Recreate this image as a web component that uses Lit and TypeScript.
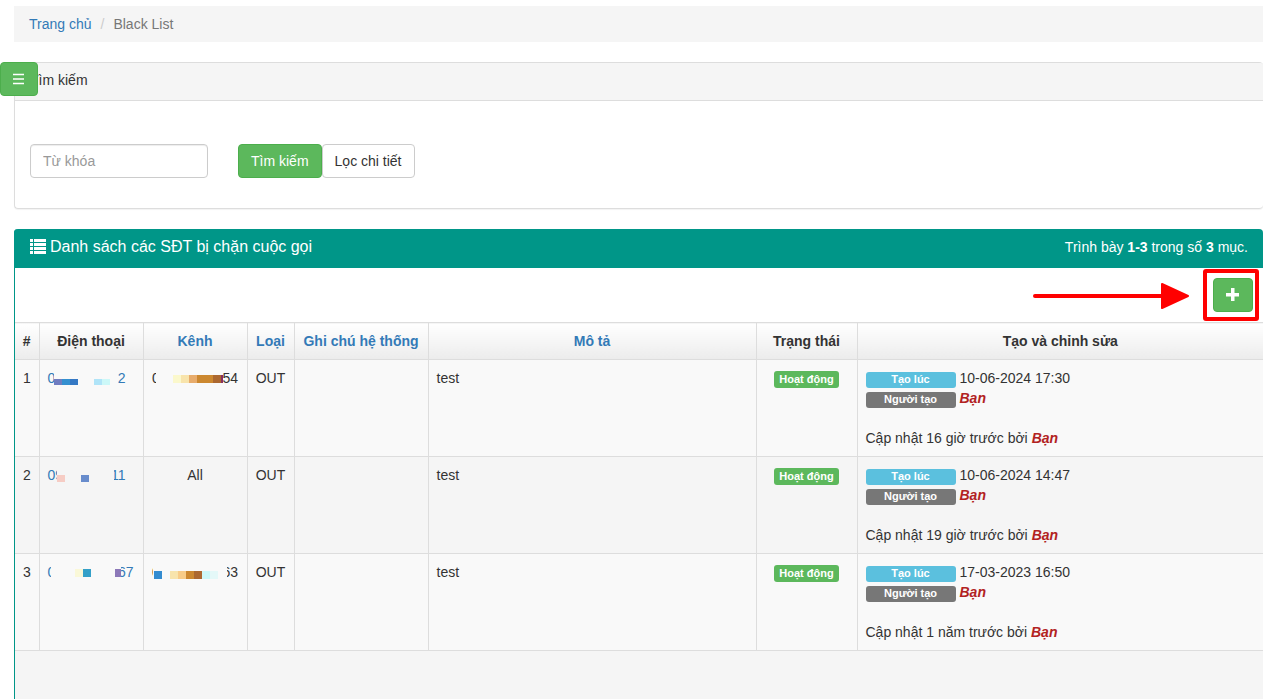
import { LitElement, html, css, svg } from "lit";
import { customElement, property } from "lit/decorators.js";

/** A coloured block of a masked number: x, y, width, height, colour. */
type Block = [number, number, number, number, string];

interface Masked {
  head: string;
  headWidth: number;
  tail: string;
  tailWidth: number;
  width: number;
  blocks: Block[];
}

interface Entry {
  phone: Masked;
  channel: Masked | string;
  kind: string;
  note: string;
  description: string;
  status: string;
  created: string;
  updated: string;
}

const entries: Entry[] = [
  {
    phone: {
      head: "0", headWidth: 6, tail: "2", tailWidth: 8, width: 78,
      blocks: [
        [6, 11, 8, 6, "#6f7cc0"], [14, 11, 8, 6, "#3490d0"], [22, 11, 8, 6, "#3478c4"],
        [46, 11, 8, 6, "#b0e4f8"], [54, 11, 8, 6, "#ccf8f8"],
      ],
    },
    channel: {
      head: "0", headWidth: 4, tail: "54", tailWidth: 16, width: 86,
      blocks: [
        [21, 7, 8, 8, "#fbf8cc"], [29, 7, 8, 8, "#f8e4ac"], [37, 7, 8, 8, "#e8ac6c"],
        [45, 7, 16, 8, "#cc8830"], [61, 7, 8, 8, "#ac6830"], [69, 7, 2, 8, "#883060"],
      ],
    },
    kind: "OUT", note: "", description: "test", status: "Hoạt động",
    created: "10-06-2024 17:30", updated: "16 giờ trước",
  },
  {
    phone: {
      head: "09", headWidth: 9, tail: "11", tailWidth: 12, width: 78,
      blocks: [[9, 10, 8, 7, "#f6ccc4"], [33, 10, 8, 7, "#688ccc"]],
    },
    channel: "All",
    kind: "OUT", note: "", description: "test", status: "Hoạt động",
    created: "10-06-2024 14:47", updated: "19 giờ trước",
  },
  {
    phone: {
      head: "0", headWidth: 3, tail: "67", tailWidth: 13, width: 86,
      blocks: [[27, 7, 8, 8, "#faf8d8"], [35, 7, 8, 8, "#34a0c8"], [67, 7, 6, 8, "#8c78b8"]],
    },
    channel: {
      head: "0", headWidth: 1, tail: "63", tailWidth: 11, width: 86,
      blocks: [
        [2, 9, 8, 8, "#348cd0"], [18, 9, 8, 8, "#f8e4ac"], [26, 9, 8, 8, "#f8cc88"],
        [34, 9, 8, 8, "#cc8830"], [42, 9, 8, 8, "#ac6830"], [50, 9, 8, 8, "#ccf8f8"],
        [58, 9, 8, 8, "#e4f8f8"],
      ],
    },
    kind: "OUT", note: "", description: "test", status: "Hoạt động",
    created: "17-03-2023 16:50", updated: "1 năm trước",
  },
];

@customElement("masked-number")
class MaskedNumber extends LitElement {
  @property({ attribute: false }) value!: Masked;

  static styles = css`
    :host { display: inline-block; vertical-align: top; }
    .row { position: relative; display: flex; justify-content: space-between; height: 20px; }
    .mask { position: absolute; left: 0; top: 0; display: block; }
    .cover { fill: var(--row-background, #fff); }
  `;

  render() {
    const v = this.value;
    return html`<div class="row" style="width:${v.width}px"><span>${v.head}</span><span>${v.tail}</span><svg
        class="mask" width=${v.width} height="20" viewBox="0 0 ${v.width} 20"
        shape-rendering="crispEdges" aria-hidden="true"><rect class="cover" x=${v.headWidth} y="0"
          width=${v.width - v.headWidth - v.tailWidth} height="20"></rect>${v.blocks.map(
          ([x, y, w, h, c]) => svg`<rect x=${x} y=${y} width=${w} height=${h} fill=${c}></rect>`
        )}</svg></div>`;
  }
}

@customElement("app-root")
class AppRoot extends LitElement {
  static styles = css`
    :host {
      display: flex;
      flex-direction: column;
      box-sizing: border-box;
      height: 100vh;
      overflow: hidden;
      padding: 6px 0 0 14px;
      font: 14px/20px "Liberation Sans", Arial, sans-serif;
      color: #333;
      background: #fff;
    }
    * { box-sizing: border-box; }
    a { color: #337ab7; text-decoration: none; }
    button, input { font: inherit; margin: 0; }

    .breadcrumb {
      display: flex;
      flex: none;
      list-style: none;
      margin: 0 0 20px;
      padding: 8px 15px;
      background: #f5f5f5;
      color: #777;
    }
    .slash { color: #ccc; padding: 0 9px; }

    .btn {
      display: inline-flex;
      align-items: center;
      justify-content: center;
      height: 34px;
      padding: 0 12px;
      border: 1px solid #ccc;
      border-radius: 4px;
      background: #fff;
      color: #333;
      white-space: nowrap;
      cursor: pointer;
    }
    .green { background: #5cb85c; border-color: #4cae4c; color: #fff; }
    .menu { position: fixed; left: 0; top: 62px; width: 38px; }
    .icon { display: block; flex: none; }

    .search {
      flex: none;
      margin-bottom: 20px;
      border: 1px solid #ddd;
      border-right: 0;
      border-radius: 4px;
      box-shadow: 0 1px 1px rgba(0, 0, 0, 0.05);
    }
    .search-title {
      margin: 0;
      padding: 7px 15px 10px;
      background: #f5f5f5;
      border-bottom: 1px solid #ddd;
      border-radius: 3px 3px 0 0;
      font-size: 14px;
      font-weight: 400;
    }
    .search-form { display: flex; padding: 43px 15px 30px; }
    .keyword {
      width: 178px;
      height: 34px;
      margin-right: 30px;
      padding: 0 12px;
      border: 1px solid #ccc;
      border-radius: 4px;
      box-shadow: inset 0 1px 1px rgba(0, 0, 0, 0.075);
      color: #555;
    }
    .keyword::placeholder { color: #999; opacity: 1; }

    .list {
      flex: 1 0 auto;
      border-left: 1px solid #009688;
      border-radius: 4px 4px 0 0;
      background: #f5f5f5;
    }
    .list-head {
      display: flex;
      align-items: center;
      justify-content: space-between;
      height: 39px;
      margin-left: -1px;
      padding: 0 15px 3px 16px;
      border-radius: 4px 4px 0 0;
      background: #009688;
      color: #fff;
    }
    .list-title {
      display: flex;
      align-items: center;
      gap: 4px;
      margin: 0;
      font-size: 16px;
      font-weight: 400;
    }
    .toolbar {
      position: relative;
      display: flex;
      justify-content: flex-end;
      padding: 10px;
      background: #fff;
    }
    .add { width: 40px; padding: 0; }
    .arrow { position: absolute; right: 73px; top: 14px; }
    .frame {
      position: absolute;
      right: 4px;
      top: 1px;
      width: 56px;
      height: 52px;
      border: 4px solid #f00;
      border-radius: 3px;
      pointer-events: none;
    }

    .table { width: 100%; table-layout: fixed; border-collapse: collapse; }
    .table th, .table td {
      padding: 8px;
      border: 1px solid #ddd;
      vertical-align: top;
      text-align: left;
    }
    .table th {
      padding: 8px 0;
      text-align: center;
      white-space: nowrap;
      background: linear-gradient(#fff, #ececec);
    }
    .table tr > :first-child { border-left: 0; }
    .table tr > :last-child { border-right: 0; }
    .table tbody tr { --row-background: #f5f5f5; background: var(--row-background); }
    .table tbody tr:nth-child(odd) { --row-background: #f9f9f9; }
    .table .center { text-align: center; }
    .c-index { width: 24px; }
    .c-number { width: 104px; }
    .c-kind { width: 47px; }
    .c-note { width: 134px; }
    .c-desc { width: 328px; }
    .c-status { width: 101px; }

    .label {
      display: inline-block;
      height: 16px;
      border-radius: 3px;
      color: #fff;
      font-size: 11px;
      font-weight: 700;
      line-height: 15px;
      text-align: center;
      white-space: nowrap;
    }
    .status { width: 65px; height: 17px; margin-top: 3px; line-height: 16px; background: #5cb85c; }
    .line { display: flex; gap: 4px; height: 20px; }
    .tag { width: 90px; margin-top: 4px; }
    .info { background: #5bc0de; }
    .default { background: #777; }
    .who { color: #b22222; font-weight: 700; font-style: italic; }
    .updated { margin-top: 20px; }
  `;

  private number(v: Masked | string) {
    return typeof v === "string" ? v : html`<masked-number .value=${v}></masked-number>`;
  }

  private row(e: Entry, i: number) {
    return html`<tr>
      <td>${i + 1}</td>
      <td><a href="#">${this.number(e.phone)}</a></td>
      <td class="center">${this.number(e.channel)}</td>
      <td class="center">${e.kind}</td>
      <td>${e.note}</td>
      <td>${e.description}</td>
      <td class="center"><span class="label status">${e.status}</span></td>
      <td>
        <div class="line"><span class="label tag info">Tạo lúc</span><span>${e.created}</span></div>
        <div class="line"><span class="label tag default">Người tạo</span><span class="who">Bạn</span></div>
        <div class="updated">Cập nhật ${e.updated} bởi <span class="who">Bạn</span></div>
      </td>
    </tr>`;
  }

  render() {
    return html`
      <ol class="breadcrumb">
        <li><a href="#">Trang chủ</a></li>
        <li class="slash" aria-hidden="true">/</li>
        <li>Black List</li>
      </ol>

      <section class="search">
        <h2 class="search-title">Tìm kiếm</h2>
        <form class="search-form" @submit=${(e: Event) => e.preventDefault()}>
          <input class="keyword" type="text" placeholder="Từ khóa" aria-label="Từ khóa" />
          <button class="btn green" type="submit">Tìm kiếm</button>
          <button class="btn" type="button">Lọc chi tiết</button>
        </form>
      </section>

      <section class="list">
        <header class="list-head">
          <h2 class="list-title">
            <svg class="icon" width="16" height="17" viewBox="0 0 16 17" fill="#fff" shape-rendering="crispEdges" aria-hidden="true">
              <path d="M0 0h3v3H0zM4 0h12v3H4zM0 4h3v3H0zM4 4h12v3H4zM0 8h3v3H0zM4 8h12v3H4zM0 12h3v3H0zM4 12h12v3H4z" />
            </svg>
            Danh sách các SĐT bị chặn cuộc gọi
          </h2>
          <div>Trình bày <b>1-3</b> trong số <b>3</b> mục.</div>
        </header>
        <div class="toolbar">
          <svg class="arrow" width="158" height="28" viewBox="0 0 158 28" fill="#f00" stroke="#f00" aria-hidden="true">
            <path d="M3 14h128" stroke-width="4" stroke-linecap="round" />
            <path d="M130 2l26 12-26 12z" stroke-width="2" stroke-linejoin="round" />
          </svg>
          <button class="btn green add" type="button" aria-label="Thêm">
            <svg class="icon" width="14" height="14" viewBox="0 0 14 14" fill="#fff" aria-hidden="true">
              <path d="M5 0h3.500v5h4.500v3.500H8.500v4.500H5V8.500H0V5h5z" />
            </svg>
          </button>
          <div class="frame"></div>
        </div>
        <table class="table">
          <colgroup>
            <col class="c-index" /><col class="c-number" /><col class="c-number" /><col class="c-kind" />
            <col class="c-note" /><col class="c-desc" /><col class="c-status" /><col />
          </colgroup>
          <thead>
            <tr>
              <th>#</th>
              <th>Điện thoại</th>
              <th><a href="#">Kênh</a></th>
              <th><a href="#">Loại</a></th>
              <th><a href="#">Ghi chú hệ thống</a></th>
              <th><a href="#">Mô tả</a></th>
              <th>Trạng thái</th>
              <th>Tạo và chỉnh sửa</th>
            </tr>
          </thead>
          <tbody>${entries.map((e, i) => this.row(e, i))}</tbody>
        </table>
      </section>

      <button class="btn green menu" type="button" aria-label="Menu">
        <svg class="icon" width="12" height="12" viewBox="0 0 12 12" stroke="#fff" stroke-width="1.4" aria-hidden="true">
          <path d="M0 1.500h11M0 6h11M0 10.500h11" />
        </svg>
      </button>
    `;
  }
}
